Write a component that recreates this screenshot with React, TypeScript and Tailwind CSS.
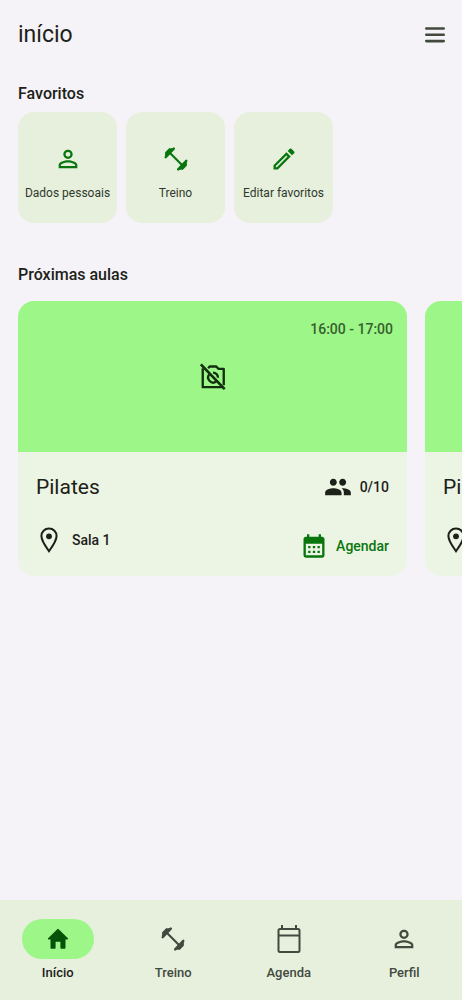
import React from 'react';
import {
  MdCalendarMonth,
  MdOutlineEdit,
  MdPeople,
  MdPersonOutline,
} from 'react-icons/md';

interface IconProps {
  className?: string;
}

const MenuIcon: React.FC<IconProps> = ({ className }) => (
  <svg viewBox="0 0 24 24" fill="none" stroke="currentColor" strokeWidth="2.6" strokeLinecap="round" className={className} aria-hidden="true">
    <path d="M3.3 5.500h17.400M3.300 11.800h17.400M3.300 18.100h17.400" />
  </svg>
);

const DumbbellIcon: React.FC<IconProps> = ({ className }) => (
  <svg viewBox="0 0 24 24" fill="none" stroke="currentColor" strokeLinecap="round" className={className} aria-hidden="true">
    <path d="M5 5 19 19" strokeWidth="2.1" />
    <path d="M1.700 10.200 9.800 1.600" strokeWidth="2.400" />
    <path d="M2.600 6.200 5.800 2.800" strokeWidth="3.200" />
    <path d="M2.200 8.200 7.800 2.400" strokeWidth="2.600" />
    <path d="M22.300 13.800 14.200 22.400" strokeWidth="2.400" />
    <path d="M21.400 17.800 18.200 21.200" strokeWidth="3.200" />
    <path d="M21.800 15.800 16.200 21.600" strokeWidth="2.600" />
  </svg>
);

const NoPhotoIcon: React.FC<IconProps> = ({ className }) => (
  <svg viewBox="0 0 24 24" fill="none" stroke="currentColor" strokeWidth="2" className={className} aria-hidden="true">
    <path d="M1.600 1.200 22 22.400" strokeWidth="2.300" />
    <path d="M3.200 4.500v16.200h17.200M7.800 4.400 9.200 3h5.600L16.600 5H21.200v14" strokeLinejoin="round" />
    <path d="M8.700 9.900a4.300 4.300 0 0 0 6 6M12 8.200a4.300 4.300 0 0 1 4.300 4.400" />
  </svg>
);

const PinIcon: React.FC<IconProps> = ({ className }) => (
  <svg viewBox="0 0 24 24" fill="none" stroke="currentColor" strokeWidth="1.900" className={className} aria-hidden="true">
    <path d="M12 1.400c-4 0-7 3-7 6.900 0 4.600 4.700 10.800 7 14 2.300-3.200 7-9.400 7-14 0-3.900-3-6.900-7-6.900Z" />
    <circle cx="12" cy="8.600" r="2.700" fill="currentColor" stroke="none" />
  </svg>
);

const HomeIcon: React.FC<IconProps> = ({ className }) => (
  <svg viewBox="0 0 24 24" fill="currentColor" className={className} aria-hidden="true">
    <path d="M11.300 2.200a1 1 0 0 1 1.400 0l9.200 9.100c.5.500.2 1.200-.5 1.200h-1.900v8.300c0 .6-.4 1-1 1h-3.300c-.5 0-.8-.3-.8-.8v-6.200H9.600V21c0 .5-.3.800-.8.800H5.500c-.6 0-1-.4-1-1v-8.300H2.600c-.7 0-1-.7-.5-1.200Z" />
  </svg>
);

const CalendarIcon: React.FC<IconProps> = ({ className }) => (
  <svg viewBox="0 0 24 28" fill="none" stroke="currentColor" strokeWidth="2" className={className} aria-hidden="true">
    <rect x="1.500" y="4" width="21" height="23" rx="1.500" />
    <path d="M1.500 10.500h21M5 0v4M19 0v4" />
  </svg>
);

const favorites = [
  { label: 'Dados pessoais', icon: <MdPersonOutline className="size-7" /> },
  { label: 'Treino', icon: <DumbbellIcon className="size-6" /> },
  { label: 'Editar favoritos', icon: <MdOutlineEdit className="size-7" /> },
];

const classes = [
  { id: 1, name: 'Pilates', time: '16:00 - 17:00', room: 'Sala 1', people: '0/10' },
  { id: 2, name: 'Pilates', time: '17:00 - 18:00', room: 'Sala 1', people: '0/10' },
];

const navItems = [
  { label: 'Início', icon: <HomeIcon className="size-6" />, active: true },
  { label: 'Treino', icon: <DumbbellIcon className="size-6" /> },
  { label: 'Agenda', icon: <CalendarIcon className="h-7 w-6" /> },
  { label: 'Perfil', icon: <MdPersonOutline className="size-7" /> },
];

const ClassCard: React.FC<{ item: (typeof classes)[number] }> = ({ item }) => (
  <article className="w-[calc(100%-55px)] shrink-0 overflow-hidden rounded-2xl bg-[#ecf5e3]">
    <div className="relative flex h-[151px] items-center justify-center bg-[#9df688]">
      <NoPhotoIcon className="size-7 text-[#12300d]" />
      <time className="absolute top-4 right-[14px] text-sm leading-6 font-medium text-[#36602d]">{item.time}</time>
    </div>
    <div className="flex flex-col gap-4 px-[18px] pt-4 pb-3">
      <div className="flex items-center justify-between">
        <h3 className="text-[21px] leading-[38px]">{item.name}</h3>
        <p className="flex items-center gap-2 text-sm font-medium">
          <MdPeople className="size-7" />
          {item.people}
        </p>
      </div>
      <div className="flex justify-between">
        <p className="flex h-9 items-center gap-[10px] text-sm font-medium">
          <PinIcon className="size-[26px]" />
          {item.room}
        </p>
        <button type="button" className="mt-[6px] flex h-9 items-center gap-2 text-sm font-medium text-[#08760c]">
          <MdCalendarMonth className="size-7" />
          Agendar
        </button>
      </div>
    </div>
  </article>
);

export default function App() {
  return (
    <div className="flex min-h-screen flex-col bg-[#f5f3f7] font-['Roboto',sans-serif] text-[#1c2119]">
      <header className="flex h-[70px] items-center justify-between pr-[15px] pl-[18px]">
        <h1 className="text-[23px]">início</h1>
        <button type="button" aria-label="Menu" className="text-[#42493e]">
          <MenuIcon className="size-6" />
        </button>
      </header>

      <main className="flex-1 overflow-hidden pl-[18px]">
        <section className="pt-3">
          <h2 className="text-base leading-6 font-medium">Favoritos</h2>
          <div className="flex gap-[9px] pt-[6px]">
            {favorites.map((fav) => (
              <button
                key={fav.label}
                type="button"
                className="flex h-[111px] w-[99px] flex-col items-center justify-center rounded-2xl bg-[#e6f0dd] pt-[14px]"
              >
                <span className="flex h-7 items-center text-[#08760c]">{fav.icon}</span>
                <span className="pt-2 text-xs leading-6 whitespace-nowrap text-[#30382c]">{fav.label}</span>
              </button>
            ))}
          </div>
        </section>

        <section className="pt-10">
          <h2 className="text-base leading-6 font-medium">Próximas aulas</h2>
          <div className="flex gap-[18px] overflow-x-auto pt-[14px] [scrollbar-width:none]">
            {classes.map((item) => (
              <ClassCard key={item.id} item={item} />
            ))}
          </div>
        </section>
      </main>

      <nav className="flex h-[100px] bg-[#e7f0dd]">
        {navItems.map((item) => (
          <a
            key={item.label}
            href="#"
            aria-current={item.active ? 'page' : undefined}
            className={`flex flex-1 flex-col items-center pt-[19px] text-[13px] font-medium ${item.active ? 'text-[#1c2119]' : 'text-[#42493e]'}`}
          >
            <span
              className={`flex h-10 w-[72px] items-center justify-center rounded-full ${item.active ? 'bg-[#9df688] text-[#065208]' : ''}`}
            >
              {item.icon}
            </span>
            <span className="pt-1 leading-5">{item.label}</span>
          </a>
        ))}
      </nav>
    </div>
  );
}
